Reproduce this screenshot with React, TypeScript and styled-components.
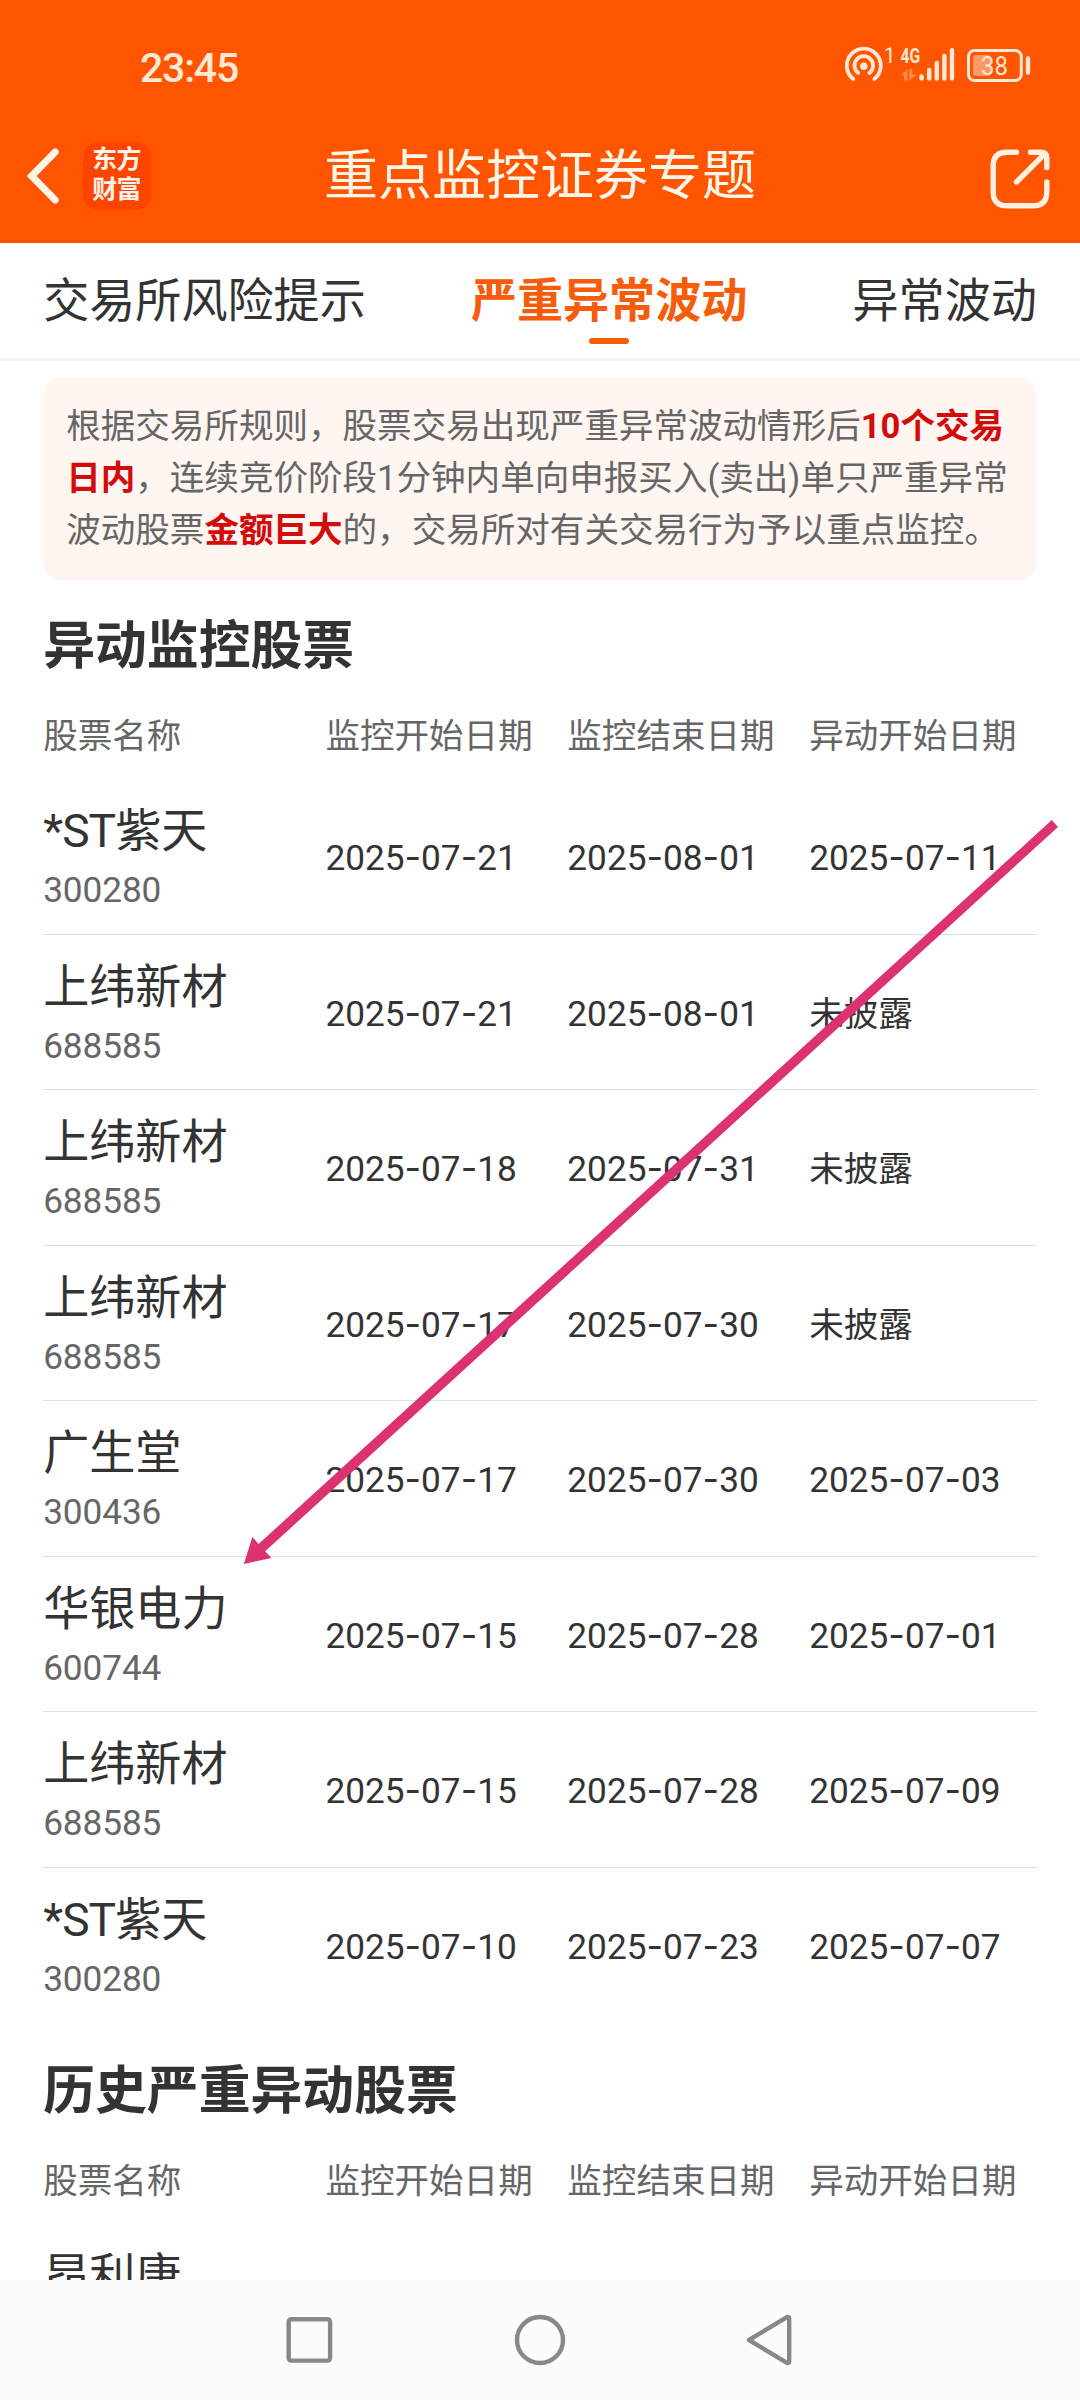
import React from "react";
import styled, { createGlobalStyle } from "styled-components";

const GlobalStyle = createGlobalStyle`
  *, *::before, *::after { box-sizing: border-box; }
  body {
    margin: 0;
    background: #fff;
    font-family: Roboto, "Noto Sans CJK SC", sans-serif;
    color: #333;
  }
`;

const Screen = styled.div`
  position: relative;
  display: flex;
  flex-direction: column;
  width: 1080px;
  height: 2400px;
  overflow: hidden;
  background: #fefefe;
`;

const Header = styled.header`
  flex: none;
  height: 243px;
  background: #ff5500;
  color: #fff6ea;
`;

const StatusBar = styled.div`
  display: flex;
  align-items: center;
  justify-content: space-between;
  height: 134px;
  padding: 0 48px 0 140px;
`;

const Clock = styled.span`
  font-size: 41px;
  font-weight: 500;
  letter-spacing: -1.2px;
  line-height: 48px;
  padding-top: 1px;
  color: #ffe9d6;
`;

const StatusIcons = styled.svg`
  display: block;
  flex: none;
`;

const TitleBar = styled.div`
  display: grid;
  grid-template-columns: 200px 1fr 200px;
  align-items: center;
  height: 83px;
`;

const TitleLeft = styled.div`
  display: flex;
  align-items: center;
  gap: 22px;
  padding-left: 25px;
`;

const AppLogo = styled.div`
  display: flex;
  flex-direction: column;
  align-items: center;
  justify-content: center;
  width: 68px;
  height: 68px;
  padding-bottom: 2px;
  padding-right: 1px;
  border-radius: 15px;
  background: #ff4400;
  color: #fff3ec;
  font-size: 25px;
  font-weight: 700;
  line-height: 29.5px;
  letter-spacing: -0.8px;
`;

const PageTitle = styled.h1`
  margin: 0;
  padding-top: 3px;
  text-align: center;
  font-size: 54px;
  font-weight: 400;
  line-height: 80px;
  white-space: nowrap;
`;

const TitleRight = styled.div`
  display: flex;
  justify-content: flex-end;
  padding-right: 28px;
  padding-top: 6px;
`;

const Tabs = styled.nav`
  flex: none;
  display: flex;
  justify-content: space-between;
  height: 118px;
  padding: 0 43.2px;
  border-bottom: 3px solid #f6f6f8;
`;

const Tab = styled.div<{ $active?: boolean }>`
  display: flex;
  flex-direction: column;
  align-items: center;
  padding-top: 24px;
  font-size: 46.08px;
  line-height: 69px;
  font-weight: ${(p) => (p.$active ? 700 : 400)};
  color: ${(p) => (p.$active ? "#f75c0a" : "#333")};
  white-space: nowrap;
`;

const TabMark = styled.span`
  width: 40px;
  height: 6px;
  margin-top: 2px;
  border-radius: 3px;
  background: #f75c0a;
`;

const Main = styled.main`
  flex: 1;
  min-height: 0;
  overflow: hidden;
  padding: 17px 43.2px 0;
`;

const Notice = styled.p`
  margin: 0;
  padding: 23px;
  border-radius: 17.28px;
  background: #fff5f1;
  color: #666;
  font-size: 34.56px;
  line-height: 51.84px;
  white-space: nowrap;
`;

const Strong = styled.strong`
  font-weight: 700;
  color: #d20b0b;
`;

const Section = styled.section`
  padding-top: 28.5px;

  & + & {
    padding-top: 30.5px;
  }
`;

const SectionTitle = styled.h2`
  margin: 0;
  font-size: 51.84px;
  font-weight: 700;
  line-height: 77.76px;
`;

const rowGrid = `
  display: grid;
  grid-template-columns: 282.24px 241.92px 241.92px 1fr;
  white-space: nowrap;
`;

const HeadRow = styled.div`
  ${rowGrid}
  padding: 25px 0 15.6px;
  font-size: 34.56px;
  line-height: 51.84px;
  color: #666;
`;

const Row = styled.div`
  ${rowGrid}
  height: 155.52px;
  padding-top: 19px;
  font-size: 34.56px;
  line-height: 51.84px;

  & + & {
    border-top: 1px solid #e0e0e0;
    padding-top: 18px;
  }
`;

const StockName = styled.div`
  font-size: 46.08px;
  line-height: 69.12px;
`;

const Latin = styled.span`
  letter-spacing: -0.9px;
`;

const StockCode = styled.div`
  margin-top: -1.3px;
  font-size: 35.2px;
  line-height: 51.84px;
  letter-spacing: -0.1px;
  color: #666;
`;

const DateText = styled.div<{ $plain: boolean }>`
  padding-top: ${(p) => (p.$plain ? "36px" : "35px")};
  font-size: ${(p) => (p.$plain ? "34.56px" : "35.2px")};
`;

const Dash = styled.span`
  font-family: Inter, sans-serif;
  font-size: 36px;
`;

const NavBar = styled.footer`
  flex: none;
  display: flex;
  align-items: center;
  justify-content: center;
  gap: 174px;
  height: 120px;
  background: #fbfbfb;
`;

const ArrowOverlay = styled.svg`
  position: absolute;
  left: 0;
  top: 0;
  pointer-events: none;
`;

type Stock = { name: string; code?: string; dates: string[] };

const monitored: Stock[] = [
  { name: "*ST紫天", code: "300280", dates: ["2025-07-21", "2025-08-01", "2025-07-11"] },
  { name: "上纬新材", code: "688585", dates: ["2025-07-21", "2025-08-01", "未披露"] },
  { name: "上纬新材", code: "688585", dates: ["2025-07-18", "2025-07-31", "未披露"] },
  { name: "上纬新材", code: "688585", dates: ["2025-07-17", "2025-07-30", "未披露"] },
  { name: "广生堂", code: "300436", dates: ["2025-07-17", "2025-07-30", "2025-07-03"] },
  { name: "华银电力", code: "600744", dates: ["2025-07-15", "2025-07-28", "2025-07-01"] },
  { name: "上纬新材", code: "688585", dates: ["2025-07-15", "2025-07-28", "2025-07-09"] },
  { name: "*ST紫天", code: "300280", dates: ["2025-07-10", "2025-07-23", "2025-07-07"] },
];

const columns = ["股票名称", "监控开始日期", "监控结束日期", "异动开始日期"];

function DateCell({ value }: { value: string }) {
  const parts = value.split("-");
  return (
    <DateText $plain={parts.length === 1}>
      {parts.map((part, i) => (
        <React.Fragment key={i}>
          {i > 0 && <Dash>-</Dash>}
          {part}
        </React.Fragment>
      ))}
    </DateText>
  );
}

function TableHead() {
  return (
    <HeadRow>
      {columns.map((c) => (
        <span key={c}>{c}</span>
      ))}
    </HeadRow>
  );
}

function StockRow({ stock }: { stock: Stock }) {
  const prefix = stock.name.startsWith("*ST") ? "*ST" : "";
  return (
    <Row>
      <div>
        <StockName>
          {prefix && <Latin>{prefix}</Latin>}
          {stock.name.slice(prefix.length)}
        </StockName>
        {stock.code && <StockCode>{stock.code}</StockCode>}
      </div>
      {stock.dates.map((d, i) => (
        <DateCell key={i} value={d} />
      ))}
    </Row>
  );
}

function StatusGlyphs() {
  return (
    <StatusIcons width="188" height="60" viewBox="844 37 188 60" fill="none" stroke="#ffe9d6">
      <g strokeWidth="3.8" strokeLinecap="round">
        <path d="M853.3 79 A17 17 0 1 1 874.3 79" />
        <path d="M858.3 73 A9.3 9.3 0 1 1 869.3 73" />
      </g>
      <circle cx="863.8" cy="66.3" r="3.8" fill="#ffe9d6" stroke="none" />
      <g fill="#ffe9d6" stroke="none" fontFamily="Roboto, sans-serif">
        <text x="884" y="63" fontSize="22.5" fontWeight="400" textLength="11.5" lengthAdjust="spacingAndGlyphs">1</text>
        <text x="900.5" y="63" fontSize="21" fontWeight="700" textLength="19.5" lengthAdjust="spacingAndGlyphs">4G</text>
      </g>
      <g fill="#ff8a48" stroke="none">
        <path d="M900.5 75.5 L907.5 69 V80.8 H904 V75.5 Z" />
        <path d="M909.2 69 H912.3 V74.5 H917 L909.2 80.8 Z" />
      </g>
      <g strokeWidth="4.4" strokeLinecap="round">
        <path d="M921.5 76.5 V78.6 M929.2 70 V78.6 M936.8 63 V78.6 M944.4 56 V78.6 M952 50.2 V78.6" />
      </g>
      <rect x="968.5" y="50.5" width="52.8" height="30" rx="6" strokeWidth="3" />
      <rect x="973" y="55" width="17.5" height="21" rx="3" fill="#ff9a66" stroke="none" />
      <path d="M1028 58.5 V72.5" strokeWidth="4.4" strokeLinecap="round" />
      <text x="981" y="75" fontSize="25" fontWeight="400" fill="#ffe9d6" stroke="none" fontFamily="Roboto, sans-serif" textLength="27" lengthAdjust="spacingAndGlyphs">38</text>
    </StatusIcons>
  );
}

export default function App() {
  return (
    <Screen>
      <GlobalStyle />
      <Header>
        <StatusBar>
          <Clock>23:45</Clock>
          <StatusGlyphs />
        </StatusBar>
        <TitleBar>
          <TitleLeft>
            <svg width="36" height="58" viewBox="0 0 36 58" fill="none" stroke="#fff6ea" strokeWidth="7" strokeLinecap="round" strokeLinejoin="miter">
              <path d="M30.2 5 L6.6 29 L30.2 53" />
            </svg>
            <AppLogo>
              <span>东方</span>
              <span>财富</span>
            </AppLogo>
          </TitleLeft>
          <PageTitle>重点监控证券专题</PageTitle>
          <TitleRight>
            <svg width="64" height="62" viewBox="988 148 64 62" fill="none" stroke="#fff0e2" strokeWidth="5.4" strokeLinecap="round" strokeLinejoin="round">
              <path d="M1016.5 152.2 H1007 Q993.2 152.2 993.2 166 V192 Q993.2 205.8 1007 205.8 H1033 Q1046.8 205.8 1046.8 192 V182" />
              <path d="M1030.5 152.2 H1041 Q1046.8 152.2 1046.8 158 V167.5" />
              <path d="M1016.5 182 L1044 154.5" />
            </svg>
          </TitleRight>
        </TitleBar>
      </Header>

      <Tabs>
        <Tab>交易所风险提示</Tab>
        <Tab $active>
          严重异常波动
          <TabMark />
        </Tab>
        <Tab>异常波动</Tab>
      </Tabs>

      <Main>
        <Notice>
          根据交易所规则，股票交易出现严重异常波动情形后<Strong>10个交易</Strong>
          <br />
          <Strong>日内</Strong>，连续竞价阶段1分钟内单向申报买入(卖出)单只严重异常
          <br />
          波动股票<Strong>金额巨大</Strong>的，交易所对有关交易行为予以重点监控。
        </Notice>

        <Section>
          <SectionTitle>异动监控股票</SectionTitle>
          <TableHead />
          {monitored.map((s, i) => (
            <StockRow key={i} stock={s} />
          ))}
        </Section>

        <Section>
          <SectionTitle>历史严重异动股票</SectionTitle>
          <TableHead />
          <StockRow stock={{ name: "昂利康", dates: [] }} />
        </Section>
      </Main>

      <NavBar>
        <svg width="56" height="56" viewBox="0 0 56 56" fill="none" stroke="#888" strokeWidth="4.4">
          <rect x="6.7" y="7.2" width="41.4" height="41.4" rx="2.5" />
        </svg>
        <svg width="56" height="56" viewBox="0 0 56 56" fill="none" stroke="#888" strokeWidth="4.4">
          <circle cx="28" cy="28" r="23" />
        </svg>
        <svg width="56" height="56" viewBox="0 0 56 56" fill="none" stroke="#888" strokeWidth="4.4" strokeLinejoin="round">
          <path d="M7 28 L44.9 5.2 Q47.2 4.6 47.2 6.5 V49.5 Q47.2 51.4 44.9 50.8 Z" />
        </svg>
      </NavBar>

      <ArrowOverlay width="1080" height="2400" viewBox="0 0 1080 2400">
        <polygon
          points="1051.8,820 1058,827 265.2,1551.3 271.4,1558 243.8,1564 252.4,1537 258.6,1544"
          fill="#dc3272"
        />
      </ArrowOverlay>
    </Screen>
  );
}
